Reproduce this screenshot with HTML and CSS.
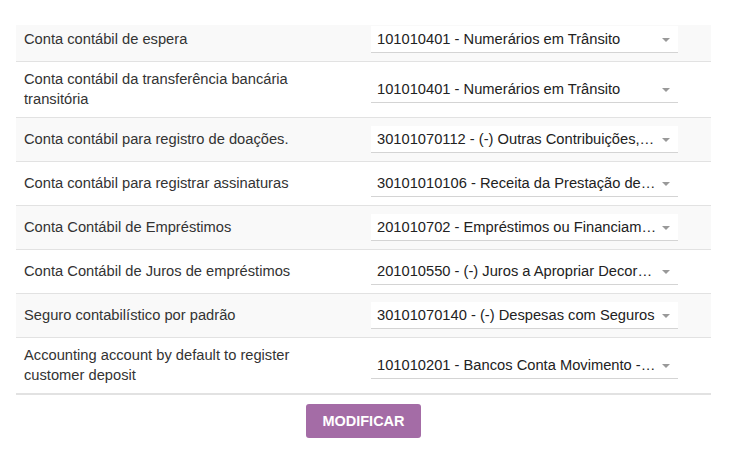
FILE: index.html
```
<!DOCTYPE html>
<html lang="pt">
<head>
    <meta charset="UTF-8">
    <title>Configurações contábeis</title>
    <link rel="stylesheet" href="styles.css">
</head>
<body>

    <div class="settings-view">
        <table class="settings-table">
            <tr>
                <td class="label-cell">Conta contábil de espera</td>
                <td class="field-cell"><div class="select-box">101010401 - Numerários em Trânsito</div></td>
            </tr>
            <tr>
                <td class="label-cell">Conta contábil da transferência bancária transitória</td>
                <td class="field-cell"><div class="select-box">101010401 - Numerários em Trânsito</div></td>
            </tr>
            <tr>
                <td class="label-cell">Conta contábil para registro de doações.</td>
                <td class="field-cell"><div class="select-box">30101070112 - (-) Outras Contribuições,…</div></td>
            </tr>
            <tr>
                <td class="label-cell">Conta contábil para registrar assinaturas</td>
                <td class="field-cell"><div class="select-box">30101010106 - Receita da Prestação de…</div></td>
            </tr>
            <tr>
                <td class="label-cell">Conta Contábil de Empréstimos</td>
                <td class="field-cell"><div class="select-box">201010702 - Empréstimos ou Financiam…</div></td>
            </tr>
            <tr>
                <td class="label-cell">Conta Contábil de Juros de empréstimos</td>
                <td class="field-cell"><div class="select-box">201010550 - (-) Juros a Apropriar Decor…</div></td>
            </tr>
            <tr>
                <td class="label-cell">Seguro contabilístico por padrão</td>
                <td class="field-cell"><div class="select-box">30101070140 - (-) Despesas com Seguros</div></td>
            </tr>
            <tr>
                <td class="label-cell">Accounting account by default to register customer deposit</td>
                <td class="field-cell"><div class="select-box">101010201 - Bancos Conta Movimento -…</div></td>
            </tr>
        </table>
    </div>

    <div class="actions">
        <button type="button" class="modify-button">Modificar</button>
    </div>

</body>
</html>
```

FILE: styles.css
```
/* --- General Setup --- */
:root {
    --text-color: #333;
    --row-gray: #f9f9f9;
    --border-color: #e2e2e2;
    --primary-color: #a46ca6;
}

body {
    font-family: 'Liberation Sans', Arial, sans-serif;
    font-size: 14.7px;
    color: var(--text-color);
    margin: 0;
    background-color: #ffffff;
}

/* --- Settings Table (scrolled a little, top row is cut) --- */
.settings-view {
    margin: 25px 19px 0 16px;
    overflow: hidden;
}

.settings-table {
    width: 100%;
    border-collapse: collapse;
    margin-top: -8px;
    border-bottom: 2px solid var(--border-color);
}

.settings-table tr {
    border-top: 1px solid var(--border-color);
}

.settings-table tr:nth-child(odd) {
    background-color: var(--row-gray);
}

.label-cell {
    width: 315px;
    padding: 8px 24px 8px 8px;
    line-height: 19.5px;
    vertical-align: middle;
}

.field-cell {
    padding: 8px;
    vertical-align: middle;
}

/* --- Fake select field --- */
.select-box {
    position: relative;
    width: 307px;
    height: 27px;
    padding: 0 20px 0 6px;
    box-sizing: border-box;
    line-height: 26px;
    background-color: #ffffff;
    border-bottom: 1px solid #d4d4d4;
    color: #222;
    white-space: nowrap;
    overflow: hidden;
}

.select-box::after {
    content: "";
    position: absolute;
    right: 8px;
    top: 12px;
    border-left: 4px solid transparent;
    border-right: 4px solid transparent;
    border-top: 4px solid #999;
}

/* --- Buttons --- */
.actions {
    text-align: center;
    margin: 9px 19px 0 16px;
}

.modify-button {
    font-family: 'Liberation Sans', Arial, sans-serif;
    font-size: 14.5px;
    font-weight: 700;
    text-transform: uppercase;
    color: #ffffff;
    background-color: var(--primary-color);
    border: none;
    border-radius: 3px;
    padding: 0 16px;
    height: 34px;
    cursor: pointer;
}
```
